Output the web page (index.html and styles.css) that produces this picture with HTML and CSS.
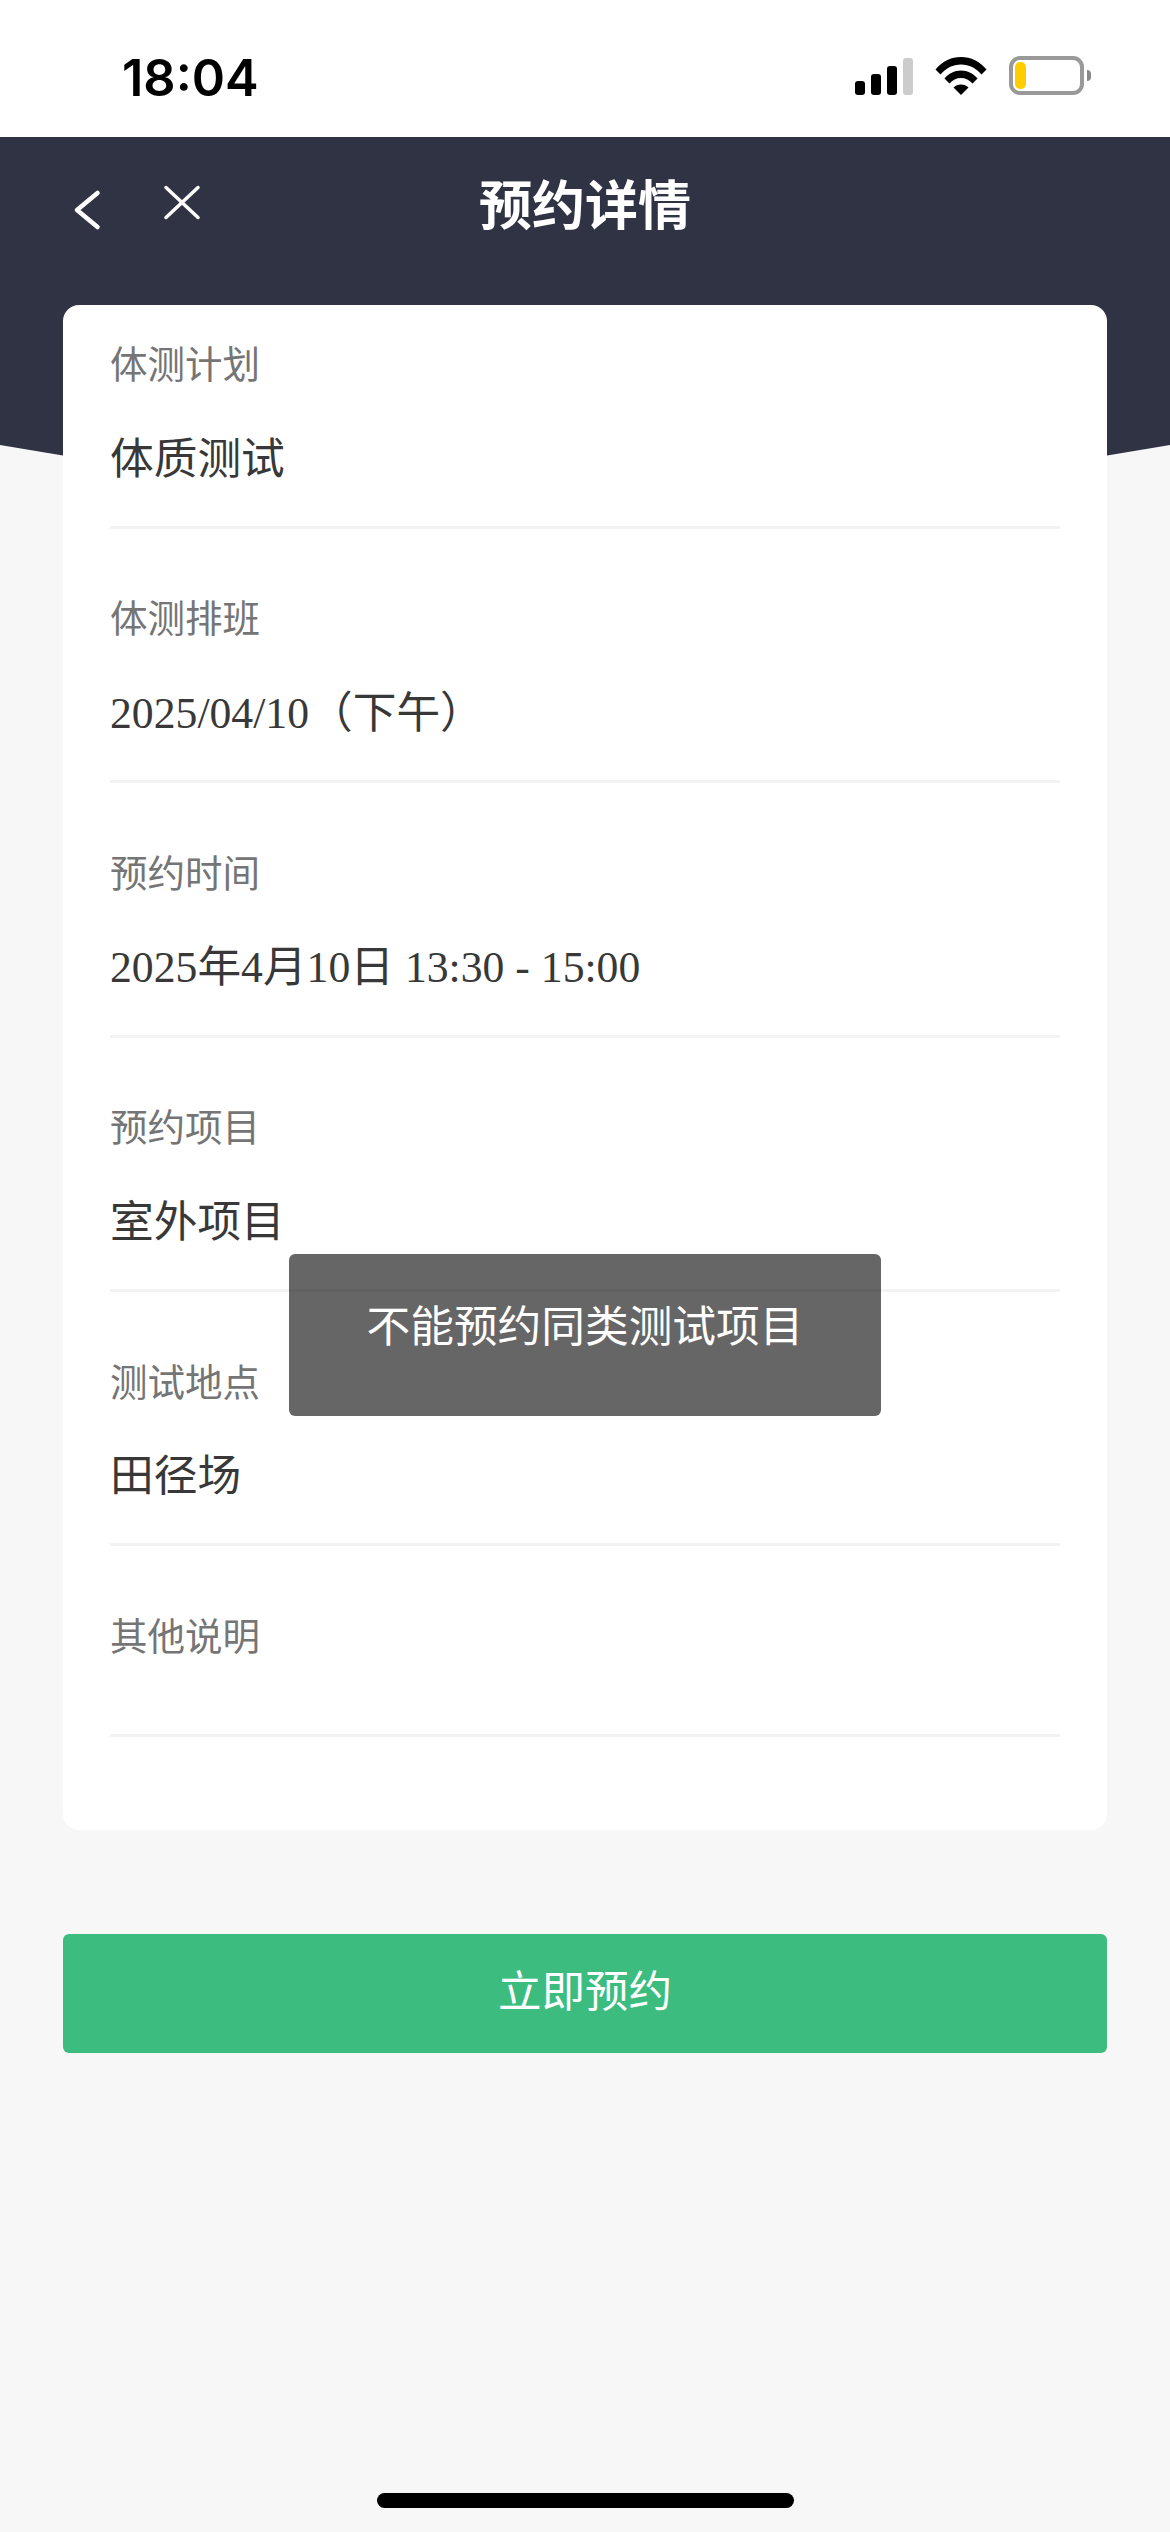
FILE: index.html
```html
<!DOCTYPE html>
<html lang="zh-CN">
<head>
<meta charset="utf-8">
<title>预约详情</title>
<link rel="stylesheet" href="styles.css">
</head>
<body>
<div class="page">
  <svg class="backdrop" width="1170" height="330" viewBox="0 0 1170 330" aria-hidden="true"><path d="M0 0H1170V308Q585 412 0 308Z" fill="#303344"/></svg>
  <header class="status-bar">
    <span class="time">18:04</span>
    <div class="status-icons">
      <div class="signal"><i class="bar b1"></i><i class="bar b2"></i><i class="bar b3"></i><i class="bar b4"></i></div>
      <svg class="wifi" width="52" height="38" viewBox="0 0 52 38" aria-hidden="true">
        <path d="M0.5 12.5C7 4.5 16 0 26 0s19 4.500 25.500 12.500L46.500 17.500C41 11 34 7.500 26 7.500S11 11 5.500 17.500Z"/>
        <path d="M9.500 21.500C13.500 16.500 19.500 13.500 26 13.500s12.500 3 16.500 8L37.500 26.500C34.500 23 30.500 21 26 21s-8.500 2-11.500 5.500Z"/>
        <path d="M18.500 30.500C20.500 28.500 23 27.500 26 27.500s5.500 1 7.500 3L26 38Z"/>
      </svg>
      <div class="battery"><div class="battery-body"><div class="battery-level"></div></div><div class="battery-nub"></div></div>
    </div>
  </header>
  <nav class="nav">
    <div class="nav-icons">
      <svg class="nav-back" width="30" height="42" viewBox="0 0 30 42" aria-hidden="true"><path d="M24.500 4L4 21L24.500 38"/></svg>
      <svg class="nav-close" width="38" height="36" viewBox="0 0 38 36" aria-hidden="true"><path d="M3 2.500L35 32.500M35 2.500L3 32.500"/></svg>
    </div>
    <h1 class="nav-title">预约详情</h1>
  </nav>
  <main class="content">
    <section class="card">
      <div class="field"><div class="label">体测计划</div><div class="value">体质测试</div></div>
      <div class="field"><div class="label">体测排班</div><div class="value">2025/04/10（下午）</div></div>
      <div class="field"><div class="label">预约时间</div><div class="value">2025年4月10日 13:30 - 15:00</div></div>
      <div class="field"><div class="label">预约项目</div><div class="value">室外项目</div></div>
      <div class="field"><div class="label">测试地点</div><div class="value">田径场</div></div>
      <div class="field field-empty"><div class="label">其他说明</div></div>
    </section>
    <button class="submit" type="button">立即预约</button>
  </main>
  <div class="toast">不能预约同类测试项目</div>
  <div class="home-indicator"></div>
</div>
</body>
</html>
```
FILE: styles.css
```css
* { box-sizing: border-box; }
html, body { margin: 0; padding: 0; }
body { background: #f7f7f8; font-family: "Liberation Serif", "Noto Sans CJK SC", serif; }
.page { position: relative; width: 1170px; height: 2532px; overflow: hidden; background: #f7f7f8; }
.backdrop { position: absolute; left: 0; top: 137px; }

.status-bar { position: relative; height: 137px; background: #fff; display: flex; align-items: center; justify-content: space-between; padding: 20px 79px 0 122px; }
.time { font-family: Inter, "Noto Sans", sans-serif; font-size: 50.500px; font-weight: 600; color: #000; line-height: 1; }
.status-icons { display: flex; align-items: flex-end; margin-top: -7px; }
.signal { display: flex; align-items: flex-end; gap: 6px; margin-right: 22px; }
.bar { display: block; width: 10px; background: #000; border-radius: 3px; }
.b1 { height: 14px; }
.b2 { height: 21px; }
.b3 { height: 29px; }
.b4 { height: 37px; background: #ccc; }
.wifi { display: block; margin-right: 22px; }
.wifi path { fill: #000; }
.battery { display: flex; align-items: center; }
.battery-body { width: 75px; height: 39px; border: 4px solid #999; border-radius: 11px; padding: 2px; }
.battery-level { width: 11px; height: 27px; background: #ffcc00; border-radius: 5px; }
.battery-nub { width: 4px; height: 11px; margin-left: 3px; background: #888; border-radius: 0 4px 4px 0; }

.nav { position: relative; height: 168px; color: #fff; }
.nav-title { margin: 0; padding-top: 34px; text-align: center; font-family: "Noto Sans CJK SC", sans-serif; font-size: 53px; line-height: 62px; font-weight: 700; }
.nav-icons { position: absolute; left: 73px; top: 48px; display: flex; align-items: flex-start; gap: 60px; }
.nav-back { display: block; margin-top: 4px; }
.nav-back path, .nav-close path { fill: none; stroke: #fff; stroke-linecap: round; stroke-linejoin: round; }
.nav-back path { stroke-width: 4.500; }
.nav-close path { stroke-width: 3.500; }

.content { position: relative; padding: 0 63px; }
.card { background: #fff; border-radius: 16px; padding: 0 47px; height: 1525px; }
.field { padding-top: 59.600px; border-bottom: 3px solid #f3f3f4; padding-bottom: 27.300px; }
.field:first-child { padding-top: 29px; }
.label { font-family: "Noto Sans CJK SC", sans-serif; font-size: 37.500px; line-height: 56px; color: #757575; }
.value { margin-top: 28.500px; font-size: 43.700px; line-height: 80px; color: #383838; }
.field-empty { padding-bottom: 72px; }

.submit { display: block; width: 100%; height: 119px; margin-top: 104px; padding: 0 0 10px; border: 0; border-radius: 6px; background: #3cbd7f; color: #fff; font-family: "Noto Sans CJK SC", sans-serif; font-size: 43.500px; }

.toast { position: absolute; left: 289px; top: 1254px; width: 592px; height: 162px; padding-top: 38px; background: rgba(0,0,0,.6); border-radius: 6px; color: #fff; text-align: center; font-family: "Noto Sans CJK SC", sans-serif; font-size: 43.700px; line-height: 62px; }
.home-indicator { position: absolute; left: 377px; top: 2493px; width: 417px; height: 15px; background: #000; border-radius: 8px; }
```
